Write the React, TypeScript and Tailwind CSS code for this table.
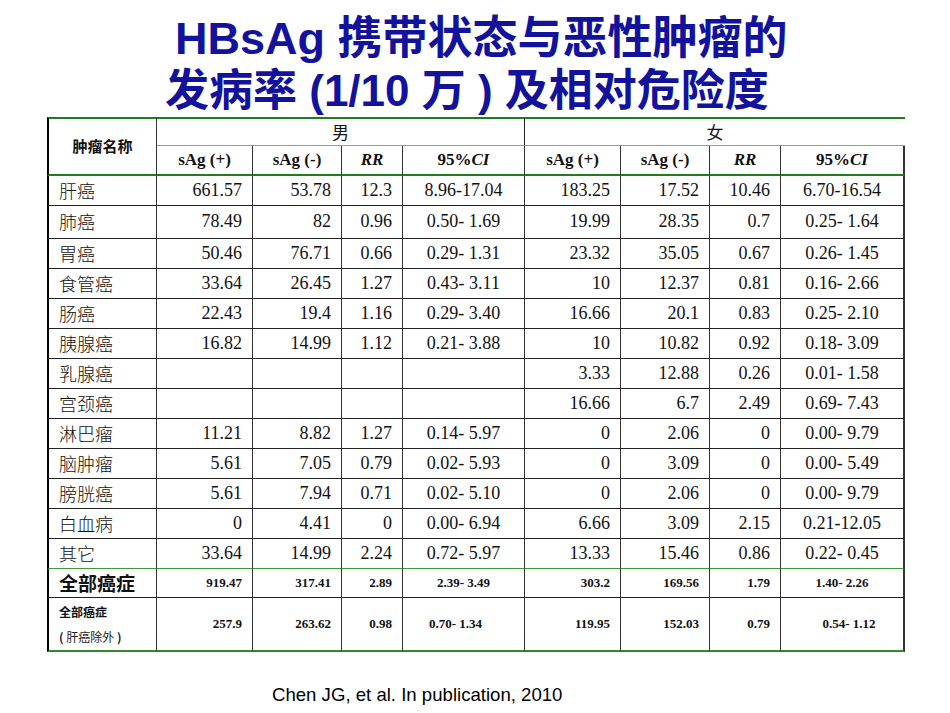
const CJK = "font-['Noto_Sans_CJK_SC',sans-serif]";
const SERIF = "font-['Liberation_Serif','Noto_Sans_CJK_SC',serif]";

const ROWS: [string, string, string, string, string, string, string, string, string][] = [
  ["肝癌", "661.57", "53.78", "12.3", "8.96-17.04", "183.25", "17.52", "10.46", "6.70-16.54"],
  ["肺癌", "78.49", "82", "0.96", "0.50- 1.69", "19.99", "28.35", "0.7", "0.25- 1.64"],
  ["胃癌", "50.46", "76.71", "0.66", "0.29- 1.31", "23.32", "35.05", "0.67", "0.26- 1.45"],
  ["食管癌", "33.64", "26.45", "1.27", "0.43- 3.11", "10", "12.37", "0.81", "0.16- 2.66"],
  ["肠癌", "22.43", "19.4", "1.16", "0.29- 3.40", "16.66", "20.1", "0.83", "0.25- 2.10"],
  ["胰腺癌", "16.82", "14.99", "1.12", "0.21- 3.88", "10", "10.82", "0.92", "0.18- 3.09"],
  ["乳腺癌", "", "", "", "", "3.33", "12.88", "0.26", "0.01- 1.58"],
  ["宫颈癌", "", "", "", "", "16.66", "6.7", "2.49", "0.69- 7.43"],
  ["淋巴瘤", "11.21", "8.82", "1.27", "0.14- 5.97", "0", "2.06", "0", "0.00- 9.79"],
  ["脑肿瘤", "5.61", "7.05", "0.79", "0.02- 5.93", "0", "3.09", "0", "0.00- 5.49"],
  ["膀胱癌", "5.61", "7.94", "0.71", "0.02- 5.10", "0", "2.06", "0", "0.00- 9.79"],
  ["白血病", "0", "4.41", "0", "0.00- 6.94", "6.66", "3.09", "2.15", "0.21-12.05"],
  ["其它", "33.64", "14.99", "2.24", "0.72- 5.97", "13.33", "15.46", "0.86", "0.22- 0.45"],
];

const WIDTHS = [110, 96, 89, 61, 122, 96, 89, 71, 124];

function HeadLabel({ label }: { label: string }) {
  if (label === "RR") return <em className="font-bold">RR</em>;
  if (label === "CI")
    return (
      <span className="font-bold">
        95%<em>CI</em>
      </span>
    );
  return <span className="font-bold">{label}</span>;
}

export default function App() {
  const subHeads = ["sAg (+)", "sAg (-)", "RR", "CI", "sAg (+)", "sAg (-)", "RR", "CI"];

  return (
    <div className="w-[950px] h-[713px] bg-white overflow-hidden">
      <h1 className={`pt-[13px] leading-[52px] font-bold text-[#12129c] font-['Liberation_Sans','Noto_Sans_CJK_SC',sans-serif]`}>
        <div className="pl-[175px] text-[45px] whitespace-nowrap">HBsAg 携带状态与恶性肿瘤的</div>
        <div className="pl-[165px] text-[44px] whitespace-nowrap">发病率 (1/10 万 ) 及相对危险度</div>
      </h1>

      <table className="ml-[47px] table-fixed border-separate border-spacing-0 text-[#111]">
        <colgroup>
          {WIDTHS.map((w, i) => (
            <col key={i} style={{ width: w }} />
          ))}
        </colgroup>
        <tbody>
          <tr>
            <td
              rowSpan={2}
              className={`${CJK} text-[15px] font-bold text-center align-middle border-l-2 border-l-black border-t-2 border-t-[#1f7d1f] border-r border-r-[#333] border-b-2 border-b-[#1f7d1f]`}
            >
              肿瘤名称
            </td>
            <td
              colSpan={4}
              className={`${CJK} h-[28px] text-[17px] text-center align-middle border-t-2 border-t-[#1f7d1f] border-r border-r-[#222] border-b border-b-[#6fb86f]`}
            >
              男
            </td>
            <td
              colSpan={4}
              className={`${CJK} text-[17px] text-center align-middle border-t-2 border-t-[#1f7d1f] border-b border-b-[#6fb86f]`}
            >
              女
            </td>
          </tr>
          <tr>
            {subHeads.map((h, i) => (
              <td
                key={i}
                className={`${SERIF} h-[30px] text-[17px] text-center align-middle border-b-2 border-b-[#1f7d1f] ${
                  i === 7 ? "border-r-2 border-r-[#333]" : "border-r border-r-[#333]"
                }`}
              >
                <HeadLabel label={h} />
              </td>
            ))}
          </tr>

          {ROWS.map((r, ri) => {
            const h = ri === 1 ? "h-[33px]" : "h-[30px]";
            const bottom = ri === ROWS.length - 1 ? "border-b border-b-[#3c9a3c]" : "border-b border-b-[#222]";
            return (
              <tr key={ri}>
                {r.map((c, ci) => {
                  if (ci === 0)
                    return (
                      <td key={ci} className={`${CJK} ${h} ${bottom} pl-[10px] text-[18px] font-light align-middle border-l-2 border-l-black border-r border-r-[#333]`}>
                        {c}
                      </td>
                    );
                  const isCI = ci === 4 || ci === 8;
                  return (
                    <td
                      key={ci}
                      className={`${SERIF} ${bottom} text-[18px] align-middle whitespace-pre ${isCI ? "text-center" : "text-right pr-[10px]"} ${
                        ci === 8 ? "border-r-2 border-r-[#333]" : "border-r border-r-[#333]"
                      }`}
                    >
                      {c}
                    </td>
                  );
                })}
              </tr>
            );
          })}

          <tr>
            <td className={`${CJK} h-[28px] pl-[10px] text-[19px] font-bold align-middle border-l-2 border-l-black border-r border-r-[#333] border-b border-b-[#222]`}>
              全部癌症
            </td>
            {["919.47", "317.41", "2.89", "2.39- 3.49", "303.2", "169.56", "1.79", "1.40- 2.26"].map((c, i) => (
              <td
                key={i}
                className={`${SERIF} text-[13px] font-bold align-middle whitespace-pre border-b border-b-[#222] ${
                  i === 3 || i === 7 ? "text-center" : "text-right pr-[10px]"
                } ${i === 7 ? "border-r-2 border-r-[#333]" : "border-r border-r-[#333]"}`}
              >
                {c}
              </td>
            ))}
          </tr>
          <tr>
            <td className={`${CJK} h-[54px] pl-[10px] align-middle border-l-2 border-l-black border-r border-r-[#333] border-b-2 border-b-[#2f8a2f]`}>
              <div className="text-[12px] font-bold leading-[16px]">全部癌症</div>
              <div className="mt-[9px] text-[12px] leading-[16px] text-[#222]">
                <span className="font-bold">(</span> 肝癌除外 <span className="font-bold">)</span>
              </div>
            </td>
            {["257.9", "263.62", "0.98", "0.70- 1.34", "119.95", "152.03", "0.79", "0.54- 1.12"].map((c, i) => (
              <td
                key={i}
                className={`${SERIF} text-[13px] font-bold align-middle whitespace-pre border-b-2 border-b-[#2f8a2f] ${
                  i === 3 ? "text-left pl-[26px]" : i === 7 ? "text-center pl-[14px]" : "text-right pr-[10px]"
                } ${i === 7 ? "border-r-2 border-r-[#333]" : "border-r border-r-[#333]"}`}
              >
                {c}
              </td>
            ))}
          </tr>
        </tbody>
      </table>

      <p className="mt-[33px] pl-[272px] text-[18.6px] leading-[20px] text-black font-['Liberation_Sans',sans-serif]">
        Chen JG, et al. In publication, 2010
      </p>
    </div>
  );
}
